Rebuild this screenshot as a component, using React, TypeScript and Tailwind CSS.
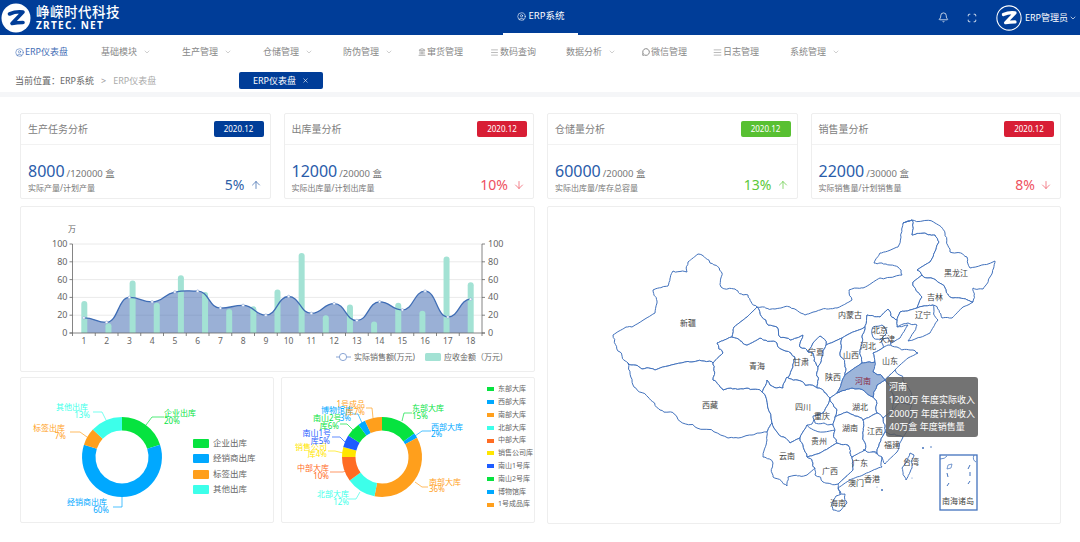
import React from "react";
import { ArrowDown, ArrowUp, Bell, ChevronDown, Scan, X, CircleUser, Menu, Landmark, MessageCircle, AlignJustify } from "lucide-react";

const FONT = '"Noto Sans","Noto Sans CJK SC",sans-serif';

function Logo({ size, ring }: { size: number; ring?: boolean }) {
  return (
    <svg width={size} height={size} viewBox="0 0 30 30" className="shrink-0">
      {ring ? (
        <circle cx="15" cy="15" r="14" fill="none" stroke="#fff" strokeWidth="1.2" />
      ) : (
        <circle cx="15" cy="15" r="14.5" fill="#fff" />
      )}
      <path
        d="M8.5 11 Q15 8 22 9 L11 20.5 Q16 19.5 22 19.5"
        fill="none"
        stroke={ring ? "#fff" : "#003d98"}
        strokeWidth="3.6"
        strokeLinejoin="round"
        strokeLinecap="round"
      />
    </svg>
  );
}

const navItems = [
  { t: "ERP仪表盘", w: "w-[86px]", active: true, icon: "user" },
  { t: "基础模块", w: "w-[81px]", chev: true },
  { t: "生产管理", w: "w-[81px]", chev: true },
  { t: "仓储管理", w: "w-[80px]", chev: true },
  { t: "防伪管理", w: "w-[75px]", chev: true },
  { t: "窜货管理", w: "w-[72px]", icon: "bank" },
  { t: "数码查询", w: "w-[76px]", icon: "menu" },
  { t: "数据分析", w: "w-[76px]", chev: true },
  { t: "微信管理", w: "w-[71px]", icon: "wx" },
  { t: "日志管理", w: "w-[77px]", icon: "menu2" },
  { t: "系统管理", w: "w-[80px]", chev: true },
];

function NavIcon({ k }: { k?: string }) {
  if (k === "user") return <CircleUser size={9} strokeWidth={1.5} className="mr-px" />;
  if (k === "bank") return <Landmark size={8} strokeWidth={2} className="mr-px" />;
  if (k === "menu") return <Menu size={9} strokeWidth={1.5} className="mr-px" />;
  if (k === "wx") return <MessageCircle size={8} strokeWidth={3} className="mr-px" />;
  if (k === "menu2") return <AlignJustify size={9} strokeWidth={1.5} className="mr-px" />;
  return null;
}

const kpis = [
  { title: "生产任务分析", color: "bg-[#003d98]", num: "8000", rest: "/120000 盒", sub: "实际产量/计划产量", pct: "5%", text: "text-[#2f5fa8]", up: true },
  { title: "出库量分析", color: "bg-[#d81e35]", num: "12000", rest: "/20000 盒", sub: "实际出库量/计划出库量", pct: "10%", text: "text-[#ee5060]", up: false },
  { title: "仓储量分析", color: "bg-[#58c032]", num: "60000", rest: "/20000 盒", sub: "实际出库量/库存总容量", pct: "13%", text: "text-[#5cc93a]", up: true },
  { title: "销售量分析", color: "bg-[#d81e35]", num: "22000", rest: "/30000 盒", sub: "实际销售量/计划销售量", pct: "8%", text: "text-[#ee5060]", up: false },
];

function Kpi(p: (typeof kpis)[number]) {
  return (
    <div className="h-[86px] rounded-[2px] border border-[#eeeeee] bg-white flex flex-col">
      <div className="h-[31px] shrink-0 border-b border-[#f2f2f2] flex items-center justify-between pl-[7px] pr-[6px]">
        <span className="text-[10px] text-[#808080]">{p.title}</span>
        <span className={`${p.color} w-[50px] h-[16px] rounded-[2px] flex items-center justify-center text-[8px] text-white`}>2020.12</span>
      </div>
      <div className="flex-1 flex items-end justify-between pl-[7px] pr-[8px] pb-[5px]">
        <div>
          <div className="flex items-baseline leading-[16px]">
            <span className="text-[16px] text-[#2a5caa]">{p.num}</span>
            <span className="text-[9.5px] text-[#777] ml-[2px]">{p.rest}</span>
          </div>
          <div className="text-[8px] leading-[11px] text-[#777]">{p.sub}</div>
        </div>
        <div className={`flex items-center gap-[5px] text-[14px] leading-[16px] ${p.text}`}>
          <span>{p.pct}</span>
          {p.up ? <ArrowUp size={12} strokeWidth={1.4} /> : <ArrowDown size={12} strokeWidth={1.4} />}
        </div>
      </div>
    </div>
  );
}

/* ---------- combo chart ---------- */
const X0 = 72.5, X1 = 482, Y0 = 333, YT = 244;
const yOf = (v: number) => Y0 - ((Y0 - YT) * v) / 100;
const lineVals = [17, 12, 40, 35, 46, 47, 28, 31, 20, 41, 22, 33, 14, 35, 26, 47, 18, 38];
const barVals = [36, 11, 59, 34, 65, 46, 27, 30, 49, 90, 20, 32, 13, 34, 25, 86, 57];
const step = (X1 - X0) / 18;
const linePts = lineVals.map((v, i) => [X0 + step * (i + 0.5), yOf(v)]);

function smooth(pts: number[][]) {
  let d = `M${pts[0][0]} ${pts[0][1]}`;
  for (let i = 0; i < pts.length - 1; i++) {
    const p0 = pts[Math.max(0, i - 1)], p1 = pts[i], p2 = pts[i + 1], p3 = pts[Math.min(pts.length - 1, i + 2)];
    const k = 0.2;
    const yA = p1[1] + (p2[1] - p0[1]) * k * (i === 0 ? 0 : 1);
    const yB = p2[1] - (p3[1] - p1[1]) * k;
    const flatA = (p1[1] - p0[1]) * (p2[1] - p1[1]) <= 0 ? p1[1] : yA;
    const flatB = (p2[1] - p1[1]) * (p3[1] - p2[1]) <= 0 ? p2[1] : yB;
    d += ` C${p1[0] + step * 0.5} ${flatA} ${p2[0] - step * 0.5} ${flatB} ${p2[0]} ${p2[1]}`;
  }
  return d;
}

function Combo() {
  const ticks = [0, 20, 40, 60, 80, 100];
  const d = smooth(linePts);
  return (
    <svg width="513" height="164" viewBox="21 207 513 164" style={{ fontFamily: FONT }} className="block">
      <text x="72" y="232" fontSize="8" fill="#666" textAnchor="middle">万</text>
      {ticks.map((t) => (
        <g key={t}>
          {t > 0 && <line x1={X0} x2={X1} y1={yOf(t)} y2={yOf(t)} stroke="#eaeaea" />}
          <line x1={X0 - 3} x2={X0} y1={yOf(t)} y2={yOf(t)} stroke="#666" strokeWidth="0.8" />
          <line x1={X1} x2={X1 + 3} y1={yOf(t)} y2={yOf(t)} stroke="#666" strokeWidth="0.8" />
          <text x={X0 - 5} y={yOf(t) + 3} fontSize="9" fill="#666" textAnchor="end">{t}</text>
          <text x={X1 + 6} y={yOf(t) + 3} fontSize="9" fill="#666">{t}</text>
        </g>
      ))}
      <path d={`${d} L${linePts[17][0]} ${Y0} L${linePts[0][0]} ${Y0} Z`} fill="#3d68b0" fillOpacity="0.52" />
      {barVals.map((v, i) => {
        const x = 84.3 + i * 24.15;
        const y = yOf(v);
        return <path key={i} d={`M${x - 3} ${Y0} V${y + 3} Q${x - 3} ${y} ${x} ${y} Q${x + 3} ${y} ${x + 3} ${y + 3} V${Y0} Z`} fill="#a3e2d4" />;
      })}
      <path d={d} fill="none" stroke="#3f6db5" strokeWidth="1.3" />
      {linePts.map((p, i) => (
        <circle key={i} cx={p[0]} cy={p[1]} r="1.3" fill="#fff" stroke="#8aa5d4" strokeWidth="0.6" />
      ))}
      <line x1={X0} x2={X0} y1={YT} y2={Y0} stroke="#666" strokeWidth="0.8" />
      <line x1={X1} x2={X1} y1={YT} y2={Y0} stroke="#666" strokeWidth="0.8" />
      <line x1={X0 - 3} x2={X1 + 3} y1={Y0} y2={Y0} stroke="#666" strokeWidth="0.8" />
      {lineVals.map((_, i) => (
        <g key={i}>
          <line x1={X0 + step * i} x2={X0 + step * i} y1={Y0} y2={Y0 + 3} stroke="#666" strokeWidth="0.8" />
          <text x={X0 + step * (i + 0.5)} y={Y0 + 11} fontSize="8.5" fill="#666" textAnchor="middle">{i + 1}</text>
        </g>
      ))}
      <line x1={X1} x2={X1} y1={Y0} y2={Y0 + 3} stroke="#666" strokeWidth="0.8" />
      <line x1="336" x2="351" y1="357" y2="357" stroke="#8aa5d4" />
      <circle cx="343" cy="357" r="3.6" fill="#fff" stroke="#8aa5d4" />
      <text x="354" y="360" fontSize="8" fill="#666">实际销售额(万元)</text>
      <rect x="425" y="353" width="16" height="8" rx="1.5" fill="#a3e2d4" />
      <text x="444" y="360" fontSize="8" fill="#666">应收金额（万元)</text>
    </svg>
  );
}

/* ---------- donuts ---------- */
function arc(cx: number, cy: number, R: number, r: number, a0: number, a1: number) {
  const pt = (rad: number, a: number) => [cx + rad * Math.sin(a * 2 * Math.PI), cy - rad * Math.cos(a * 2 * Math.PI)];
  const [x0, y0] = pt(R, a0), [x1, y1] = pt(R, a1), [x2, y2] = pt(r, a1), [x3, y3] = pt(r, a0);
  const large = a1 - a0 > 0.5 ? 1 : 0;
  return `M${x0} ${y0} A${R} ${R} 0 ${large} 1 ${x1} ${y1} L${x2} ${y2} A${r} ${r} 0 ${large} 0 ${x3} ${y3} Z`;
}

type Lab = { c: string; v: number; line: string; texts: [string, number, number, "start" | "end"][] };

function Donut({ cx, data, box, w }: { cx: number; data: Lab[]; box: string; w: number }) {
  let acc = 0;
  return (
    <svg width={w} height="144" viewBox={box} style={{ fontFamily: FONT }} className="block shrink-0 overflow-visible">
      {data.map((s, i) => {
        const a0 = acc;
        acc += s.v / 100;
        return (
          <g key={i}>
            <path d={arc(cx, 457, 40, 26.5, a0, acc)} fill={s.c} />
            <polyline points={s.line} fill="none" stroke={s.c} strokeWidth="0.7" />
            {s.texts.map(([t, x, y, anchor], j) => (
              <text key={j} x={x} y={y} fontSize="8" fill={s.c} textAnchor={anchor}>{t}</text>
            ))}
          </g>
        );
      })}
    </svg>
  );
}

const G = "#06e33f", B = "#00a8ff", O = "#ff9f1c", C = "#3dffea", R = "#ff6c23", Y = "#ffe600", D = "#1e5cff";

const leftData: Lab[] = [
  { c: G, v: 20, line: "146,425 152,417 164,417", texts: [["企业出库", 164, 416, "start"], ["20%", 164, 424, "start"]] },
  { c: B, v: 60, line: "122,497 122,507 113,507", texts: [["经销商出库", 107, 505, "end"], ["60%", 109, 513, "end"]] },
  { c: O, v: 7, line: "87,437 80,432 70,432", texts: [["标签出库", 65, 431, "end"], ["7%", 66, 439, "end"]] },
  { c: C, v: 13, line: "106,420 102,412 93,412", texts: [["其他出库", 88, 410, "end"], ["13%", 90, 418, "end"]] },
];

const rightData: Lab[] = [
  { c: G, v: 15, line: "402,421 404,413 412,413", texts: [["东部大库", 412, 411, "start"], ["15%", 412, 419, "start"]] },
  { c: B, v: 2, line: "415,436 422,431 431,431", texts: [["西部大库", 431, 430, "start"], ["2%", 431, 437, "start"]] },
  { c: O, v: 36, line: "415,482 422,487 428,487", texts: [["南部大库", 429, 485, "start"], ["36%", 429, 492, "start"]] },
  { c: C, v: 12, line: "360,492 356,499 348,499", texts: [["北部大库", 349, 497, "end"], ["12%", 349, 505, "end"]] },
  { c: R, v: 10, line: "348,470 343,472 330,472", texts: [["中部大库", 329, 471, "end"], ["10%", 329, 479, "end"]] },
  { c: Y, v: 4, line: "343,453 335,451 328,451", texts: [["销售公司", 327, 450, "end"], ["库4%", 327, 457, "end"]] },
  { c: D, v: 5, line: "346,443 340,437 332,437", texts: [["南山1号", 331, 436, "end"], ["库5%", 330, 444, "end"]] },
  { c: G, v: 6, line: "353,430 347,424 340,424", texts: [["南山2号", 313, 421, "start"], ["库6%", 339, 429, "end"]] },
  { c: B, v: 3, line: "362,423 358,414 352,414", texts: [["博物馆库", 321, 413, "start"], ["3%", 351, 421, "end"]] },
  { c: O, v: 7, line: "373,418 372,408 366,408", texts: [["1号成品", 365, 407, "end"], ["库7%", 365, 415, "end"]] },
];

const leftLegend = [["企业出库", "bg-[#06e33f]"], ["经销商出库", "bg-[#00a8ff]"], ["标签出库", "bg-[#ff9f1c]"], ["其他出库", "bg-[#3dffea]"]];
const rightLegend = [["东部大库", "bg-[#06e33f]"], ["西部大库", "bg-[#00a8ff]"], ["南部大库", "bg-[#ff9f1c]"], ["北部大库", "bg-[#3dffea]"], ["中部大库", "bg-[#ff6c23]"], ["销售公司库", "bg-[#ffe600]"], ["南山1号库", "bg-[#1e5cff]"], ["南山2号库", "bg-[#06e33f]"], ["博物馆库", "bg-[#00a8ff]"], ["1号成品库", "bg-[#ff9f1c]"]];

/* ---------- map ---------- */
const provinces: string[] = [
  "698,254 688,262 687,272 673,271 668,286 653,290 657,303 655,313 632,327 626,327 613,335 620,352 628,363 642,369 655,370 668,366 692,362 713,363 723,353 717,343 732,337 734,327 747,317 757,307 748,295 735,289 721,287 722,273 710,263 702,255",
  "642,369 655,370 668,366 692,362 713,363 713,380 723,390 747,388 762,392 772,423 767,432 752,435 728,438 697,428 677,417 660,410 648,397 633,385 628,363",
  "713,363 723,353 717,343 732,337 747,345 760,338 777,343 795,357 793,367 783,388 770,385 767,380 762,392 747,388 723,390 713,380",
  "732,337 734,327 747,317 757,307 768,325 777,327 780,337 790,340 803,335 800,347 808,352 813,353 818,367 817,372 817,388 797,380 787,377 783,388 793,367 795,357 777,343 760,338 747,345",
  "757,307 775,309 790,307 805,315 820,310 837,308 852,300 849,290 863,288 880,278 902,275 898,267 882,263 874,263 880,253 898,247 903,223 912,220 912,235 923,233 935,235 939,242 930,262 917,270 922,275 913,282 922,297 917,308 900,312 897,320 888,309 880,317 867,315 865,327 847,335 842,338 826,345 820,336 813,343 808,352 800,347 803,335 790,340 780,337 777,327 768,325",
  "903,223 912,220 935,223 945,233 950,252 967,257 970,268 995,261 990,277 983,289 973,288 973,302 960,298 953,298 945,288 927,278 922,275 917,270 930,262 939,242 935,235 923,233 912,235 912,220",
  "922,275 927,278 945,288 953,298 960,298 973,302 963,307 952,318 942,318 933,305 917,308 922,297 913,282",
  "897,320 900,312 917,308 933,305 938,320 930,333 908,341 917,325 908,323 897,327",
  "813,343 820,336 826,345 822,357 818,367 813,353 808,352",
  "842,338 840,353 845,367 845,375 837,393 830,398 817,388 817,372 818,367 822,357 826,345",
  "847,335 842,338 840,353 845,367 845,375 862,363 860,350 862,337 865,327",
  "865,327 867,315 880,317 888,309 897,320 897,327 908,325 900,338 888,345 873,353 875,362 862,363 860,350 862,337",
  "873,327 882,325 886,334 880,340 873,337",
  "882,339 888,338 892,347 886,350 883,345",
  "875,362 873,353 888,345 897,347 910,350 918,353 908,358 900,365 895,370 885,380 873,372 873,363",
  "885,380 895,370 907,385 912,395 900,402 893,395",
  "877,385 885,380 893,395 893,410 883,418 877,413 873,397",
  "893,410 900,402 912,405 908,425 903,437 885,432 883,418",
  "762,392 767,380 770,385 783,388 787,377 797,380 817,388 830,398 823,413 815,415 812,424 807,425 800,438 790,443 777,432 772,423",
  "830,398 837,410 835,417 833,425 824,423 815,423 813,416 823,413",
  "767,432 772,423 777,432 790,443 800,438 807,457 815,468 807,475 788,477 787,486 773,477 773,463 763,457 767,440",
  "800,438 807,425 824,432 835,430 837,443 820,453 807,457",
  "807,457 820,453 837,443 848,445 852,457 853,470 838,484 823,482 815,475 815,468",
  "852,457 863,450 882,457 882,467 863,475 850,480 838,488 841,496 838,484 853,470",
  "836,496 845,494 847,503 840,511 833,510 832,503",
  "837,393 852,388 873,397 877,413 863,420 847,412 835,417 837,410 830,398",
  "835,417 847,412 863,420 863,437 865,450 852,457 848,445 837,443 835,430 833,425",
  "863,420 877,413 883,418 885,432 877,453 867,452 863,450 865,450 863,437",
  "885,432 903,437 897,452 885,464 882,457 877,453",
  "910,453 914,455 912,468 906,480 902,468",
];
const henan = "845,375 862,363 875,362 873,372 885,380 877,385 873,397 852,388 837,393";

const mapLabels: [string, number, number, string?][] = [
  ["新疆", 688, 326], ["青海", 757, 369], ["甘肃", 801, 365], ["宁夏", 816, 355], ["内蒙古", 850, 318], ["黑龙江", 956, 276],
  ["吉林", 935, 300], ["辽宁", 923, 318], ["北京", 880, 333], ["天津", 887, 342], ["河北", 868, 349], ["山西", 851, 358],
  ["山东", 890, 364], ["陕西", 833, 380], ["河南", 863, 384, "#8a2540"], ["西藏", 710, 408], ["四川", 803, 410], ["重庆", 822, 419],
  ["湖北", 860, 410], ["湖南", 850, 431], ["江西", 875, 434], ["贵州", 819, 444], ["福建", 892, 448], ["云南", 787, 459],
  ["广西", 830, 474], ["广东", 860, 466], ["台湾", 911, 465], ["香港", 872, 482], ["澳门", 856, 486], ["海南", 838, 506], ["南海诸岛", 958, 504],
];

function wobble(str: string) {
  const pts = str.split(" ").map((p) => p.split(",").map(Number));
  const out: number[][] = [];
  const hash = (a: number[], b: number[]) => {
    const s = Math.sin((a[0] + b[0]) * 12.9898 + (a[1] + b[1]) * 78.233) * 43758.5453;
    return s - Math.floor(s) - 0.5;
  };
  const sub = (a: number[], b: number[], depth: number) => {
    const len = Math.hypot(b[0] - a[0], b[1] - a[1]);
    if (depth === 0 || len < 3) return;
    const h = hash(a, b) * Math.min(len * 0.3, 4);
    const m = [(a[0] + b[0]) / 2 + h, (a[1] + b[1]) / 2 - h * 0.8];
    sub(a, m, depth - 1);
    out.push(m);
    sub(m, b, depth - 1);
  };
  pts.forEach((p, i) => {
    const q = pts[(i + 1) % pts.length];
    out.push(p);
    const forward = p[0] < q[0] || (p[0] === q[0] && p[1] < q[1]);
    if (forward) sub(p, q, 3);
    else {
      const start = out.length;
      sub(q, p, 3);
      const tail = out.splice(start).reverse();
      out.push(...tail);
    }
  });
  return out.map((p) => `${p[0].toFixed(1)},${p[1].toFixed(1)}`).join(" ");
}

function ChinaMap() {
  return (
    <svg width="512" height="316" viewBox="548 207 512 316" style={{ fontFamily: FONT }} className="block">
      <g fill="#fff" stroke="#4272bd" strokeWidth="1" strokeLinejoin="round">
        {provinces.map((p, i) => <polygon key={i} points={wobble(p)} />)}
        <polygon points={wobble(henan)} fill="#9db5da" />
      </g>
      <rect x="940" y="455" width="37" height="55" fill="none" stroke="#4272bd" strokeWidth="1.3" />
      <path d="M940 459 Q945 459 947 456 M974 455 Q972 460 976 462" fill="none" stroke="#4272bd" strokeWidth="0.8" />
      <g fill="none" stroke="#4272bd" strokeWidth="1">
        <path d="M948 465 l4 -1 l-1 4 l-4 1 Z" strokeWidth="0.7" />
        <path d="M947 473 l1 4 M949 483 l-2 3 M970 465 l-2 4 M970 472 v4 M970 481 l-2 3" />
      </g>
      <g fill="#4272bd">
        <circle cx="923" cy="448" r="1" /><circle cx="931" cy="447" r="0.8" /><circle cx="882" cy="490" r="1" /><circle cx="877" cy="487" r="0.5" /><circle cx="912" cy="478" r="0.5" />
      </g>
      {mapLabels.map(([t, x, y, c]) => (
        <text key={t} x={x} y={y} fontSize="8" fill={c ?? "#444"} textAnchor="middle">{t}</text>
      ))}
    </svg>
  );
}

export default function App() {
  return (
    <div className="w-[1080px] h-[542px] overflow-hidden bg-white flex flex-col" style={{ fontFamily: FONT }}>
      <header className="h-[35px] shrink-0 bg-[#003d98] text-white flex items-center relative">
        <div className="ml-[1px] flex items-center gap-[5px]">
          <Logo size={30} />
          <div className="flex flex-col">
            <span className="text-[13.5px] leading-[15px] font-medium tracking-[0.5px]">峥嵘时代科技</span>
            <span className="text-[10px] leading-[11px] font-bold tracking-[1.3px]">ZRTEC. NET</span>
          </div>
        </div>
        <div className="absolute left-[503px] top-0 h-[35px] w-[75px] border-b-2 border-white flex items-center justify-center gap-[3px] text-[9.5px]">
          <CircleUser size={9} strokeWidth={1.6} />
          <span>ERP系统</span>
        </div>
        <div className="ml-auto flex items-center pr-[3px]">
          <Bell size={11} strokeWidth={1.6} />
          <Scan size={10} strokeWidth={2} className="ml-[18px]" />
          <span className="ml-[19px]"><Logo size={26} ring /></span>
          <span className="ml-[3px] text-[9px]">ERP管理员</span>
          <ChevronDown size={8} strokeWidth={2} className="ml-px" />
        </div>
      </header>

      <nav className="h-[34px] shrink-0 flex items-center pl-[15px] text-[9px] text-[#888]">
        {navItems.map((n) => (
          <div key={n.t} className={`${n.w} shrink-0 flex items-center ${n.active ? "text-[#3f6db5]" : ""}`}>
            <NavIcon k={n.icon} />
            <span>{n.t}</span>
            {n.chev && <ChevronDown size={8} strokeWidth={1.2} className="ml-[6px]" />}
          </div>
        ))}
      </nav>

      <div className="h-[23px] shrink-0 flex items-center pl-[15px] text-[9px] text-[#999] relative">
        <span className="text-[#666]">当前位置：ERP系统</span>
        <span className="mx-[7px]">&gt;</span>
        <span className="text-[#aaa]">ERP仪表盘</span>
        <div className="absolute left-[239px] top-[3px] w-[84px] h-[17px] bg-[#003d98] rounded-[2px] text-white text-[9px] flex items-center justify-center gap-[6px]">
          <span>ERP仪表盘</span>
          <X size={7} strokeWidth={2} />
        </div>
      </div>
      <div className="h-[5px] shrink-0 bg-[#f5f6f8]" />

      <main className="flex-1 pt-[16px] pl-[20px] pr-[19px] flex flex-col gap-[7px]">
        <div className="grid grid-cols-4 gap-[13px]">
          {kpis.map((k) => <Kpi key={k.title} {...k} />)}
        </div>
        <div className="flex gap-[12px]">
          <div className="w-[515px] flex flex-col gap-[5px]">
            <div className="h-[166px] rounded-[2px] border border-[#eeeeee]"><Combo /></div>
            <div className="flex gap-[7px]">
              <div className="w-[254px] h-[146px] rounded-[2px] border border-[#eeeeee] flex items-start">
                <Donut cx={122} data={leftData} box="21 378 172 144" w={172} />
                <div className="flex flex-col gap-[5px] mt-[60px]">
                  {leftLegend.map(([t, c]) => (
                    <div key={t} className="flex items-center gap-[4px] h-[10.5px] text-[8.5px] text-[#666]">
                      <span className={`${c} w-[16px] h-[9px] rounded-[1px]`} />
                      <span>{t}</span>
                    </div>
                  ))}
                </div>
              </div>
              <div className="w-[254px] h-[146px] rounded-[2px] border border-[#eeeeee] flex items-start">
                <Donut cx={382} data={rightData} box="282 378 205 144" w={205} />
                <div className="flex flex-col gap-[2px] mt-[6px]">
                  {rightLegend.map(([t, c]) => (
                    <div key={t} className="flex items-center gap-[4px] h-[10.8px] text-[7px] text-[#666] whitespace-nowrap">
                      <span className={`${c} w-[7px] h-[4px]`} />
                      <span>{t}</span>
                    </div>
                  ))}
                </div>
              </div>
            </div>
          </div>
          <div className="w-[514px] h-[318px] rounded-[2px] border border-[#eeeeee] relative">
            <ChinaMap />
            <div className="absolute left-[338px] top-[170px] w-[92px] h-[60px] rounded-[3px] bg-[#5a5a5a]/85 text-white text-[9px] leading-[13.3px] px-[3px] py-[3px] whitespace-nowrap">
              <div>河南</div>
              <div>1200万 年度实际收入</div>
              <div>2000万 年度计划收入</div>
              <div>40万盒 年度销售量</div>
            </div>
          </div>
        </div>
      </main>
    </div>
  );
}
